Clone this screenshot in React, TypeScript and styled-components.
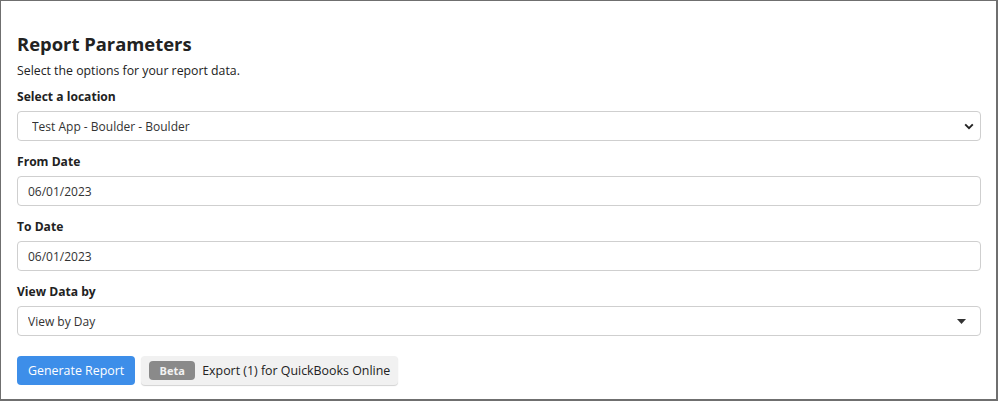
import React from 'react'
import styled, { createGlobalStyle } from 'styled-components'

const Global = createGlobalStyle`
  html, body { margin: 0; padding: 0; background: #fff; }
  body { font-family: "Open Sans", "Liberation Sans", sans-serif; color: #222; }
  * { box-sizing: border-box; }
`

const Frame = styled.div`
  width: 998px;
  height: 401px;
  border: 1px solid #6f6f6f;
  border-right-width: 2px;
  border-bottom-width: 2px;
  padding: 30px 15px 0 16px;
  display: flex;
  flex-direction: column;
`

const Title = styled.h2`
  margin: 0 0 4px;
  font-size: 18.4px;
  line-height: 26px;
  font-weight: 700;
  color: #222;
`

const Subtitle = styled.p`
  margin: 0 0 6px;
  font-size: 12.3px;
  line-height: 20px;
  color: #222;
`

const Field = styled.div`
  display: flex;
  flex-direction: column;
  gap: 4px;
  margin-bottom: 11px;
`

const Label = styled.label`
  font-size: 12.1px;
  line-height: 20px;
  font-weight: 700;
  color: #222;
`

const Control = styled.div`
  position: relative;
  height: 30px;
`

const boxStyles = `
  width: 100%;
  height: 30px;
  border: 1px solid #cfcfcf;
  border-radius: 4px;
  background: #fff;
  font-family: "Open Sans", "Liberation Sans", sans-serif;
  font-size: 12px;
  color: #333;
  outline: none;
`

const Select = styled.select<{ $pad: number }>`
  ${boxStyles}
  appearance: none;
  -webkit-appearance: none;
  padding: 0 30px 0 ${p => p.$pad}px;
`

const Input = styled.input`
  ${boxStyles}
  padding: 0 10px;
`

const Arrow = styled.span<{ $right: number }>`
  position: absolute;
  top: 0;
  bottom: 0;
  right: ${p => p.$right}px;
  display: flex;
  align-items: center;
  pointer-events: none;
`

const Actions = styled.div`
  display: flex;
  gap: 6px;
  align-items: flex-start;
  margin-top: 9px;
`

const Primary = styled.button`
  height: 29px;
  padding: 0 11px;
  border: none;
  border-radius: 4px;
  background: #3d8ee9;
  color: #fff;
  font-family: inherit;
  font-size: 12.4px;
`

const Secondary = styled.button`
  height: 29px;
  padding: 0 8px;
  border: none;
  border-radius: 4px;
  background: #f1f1f1;
  box-shadow: 0 1px 1px rgba(0, 0, 0, 0.18);
  color: #222;
  font-family: inherit;
  font-size: 12.4px;
  display: flex;
  align-items: center;
  gap: 7px;
`

const Badge = styled.span`
  display: inline-flex;
  align-items: center;
  justify-content: center;
  width: 46px;
  height: 19px;
  border-radius: 4px;
  background: #8a8a8a;
  color: #f2f2f2;
  font-size: 11px;
  font-weight: 700;
`

const Chevron = () => (
  <svg width="10" height="7" viewBox="0 0 10 7">
    <path d="M1.2 1.4 L5 5.2 L8.8 1.4" fill="none" stroke="#222" strokeWidth="1.9" />
  </svg>
)

const Caret = () => (
  <svg width="9" height="5" viewBox="0 0 9 5">
    <path d="M0 0 H9 L4.5 5 Z" fill="#333" />
  </svg>
)

export default function App() {
  return (
    <>
      <Global />
      <Frame>
        <Title>Report Parameters</Title>
        <Subtitle>Select the options for your report data.</Subtitle>
        <Field>
          <Label>Select a location</Label>
          <Control>
            <Select $pad={14} defaultValue="boulder">
              <option value="boulder">Test App - Boulder - Boulder</option>
            </Select>
            <Arrow $right={7}><Chevron /></Arrow>
          </Control>
        </Field>
        <Field>
          <Label>From Date</Label>
          <Control>
            <Input defaultValue="06/01/2023" />
          </Control>
        </Field>
        <Field>
          <Label>To Date</Label>
          <Control>
            <Input defaultValue="06/01/2023" />
          </Control>
        </Field>
        <Field>
          <Label>View Data by</Label>
          <Control>
            <Select $pad={10} defaultValue="day">
              <option value="day">View by Day</option>
            </Select>
            <Arrow $right={15}><Caret /></Arrow>
          </Control>
        </Field>
        <Actions>
          <Primary>Generate Report</Primary>
          <Secondary>
            <Badge>Beta</Badge>
            Export (1) for QuickBooks Online
          </Secondary>
        </Actions>
      </Frame>
    </>
  )
}
